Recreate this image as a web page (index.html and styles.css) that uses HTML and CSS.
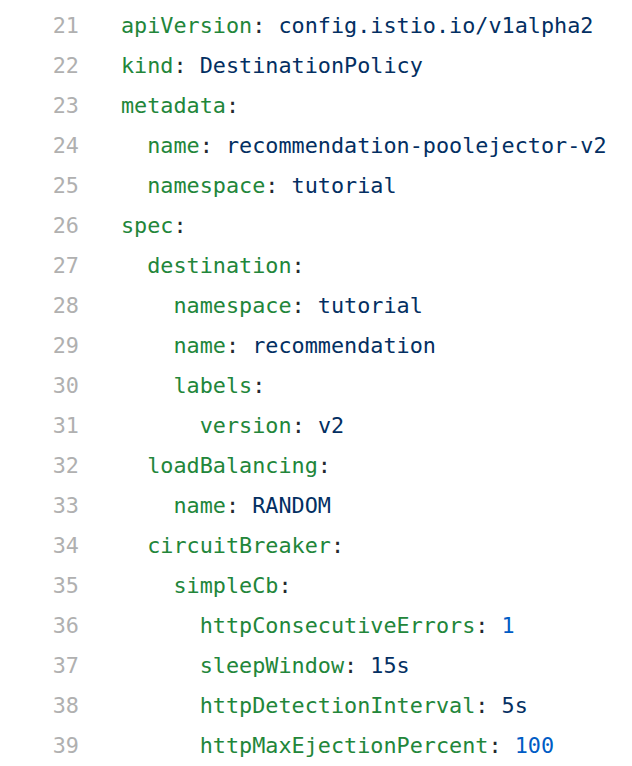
FILE: index.html
```html
<!DOCTYPE html>
<html>
<head>
<meta charset="utf-8">
<link rel="stylesheet" href="styles.css">
</head>
<body>
<div class="code">
  <div class="row"><span class="num">21</span><span class="line"><span class="k">apiVersion</span><span class="p">:</span> <span class="v">config.istio.io/v1alpha2</span></span></div>
  <div class="row"><span class="num">22</span><span class="line"><span class="k">kind</span><span class="p">:</span> <span class="v">DestinationPolicy</span></span></div>
  <div class="row"><span class="num">23</span><span class="line"><span class="k">metadata</span><span class="p">:</span></span></div>
  <div class="row"><span class="num">24</span><span class="line">  <span class="k">name</span><span class="p">:</span> <span class="v">recommendation-poolejector-v2</span></span></div>
  <div class="row"><span class="num">25</span><span class="line">  <span class="k">namespace</span><span class="p">:</span> <span class="v">tutorial</span></span></div>
  <div class="row"><span class="num">26</span><span class="line"><span class="k">spec</span><span class="p">:</span></span></div>
  <div class="row"><span class="num">27</span><span class="line">  <span class="k">destination</span><span class="p">:</span></span></div>
  <div class="row"><span class="num">28</span><span class="line">    <span class="k">namespace</span><span class="p">:</span> <span class="v">tutorial</span></span></div>
  <div class="row"><span class="num">29</span><span class="line">    <span class="k">name</span><span class="p">:</span> <span class="v">recommendation</span></span></div>
  <div class="row"><span class="num">30</span><span class="line">    <span class="k">labels</span><span class="p">:</span></span></div>
  <div class="row"><span class="num">31</span><span class="line">      <span class="k">version</span><span class="p">:</span> <span class="v">v2</span></span></div>
  <div class="row"><span class="num">32</span><span class="line">  <span class="k">loadBalancing</span><span class="p">:</span></span></div>
  <div class="row"><span class="num">33</span><span class="line">    <span class="k">name</span><span class="p">:</span> <span class="v">RANDOM</span></span></div>
  <div class="row"><span class="num">34</span><span class="line">  <span class="k">circuitBreaker</span><span class="p">:</span></span></div>
  <div class="row"><span class="num">35</span><span class="line">    <span class="k">simpleCb</span><span class="p">:</span></span></div>
  <div class="row"><span class="num">36</span><span class="line">      <span class="k">httpConsecutiveErrors</span><span class="p">:</span> <span class="n">1</span></span></div>
  <div class="row"><span class="num">37</span><span class="line">      <span class="k">sleepWindow</span><span class="p">:</span> <span class="v">15s</span></span></div>
  <div class="row"><span class="num">38</span><span class="line">      <span class="k">httpDetectionInterval</span><span class="p">:</span> <span class="v">5s</span></span></div>
  <div class="row"><span class="num">39</span><span class="line">      <span class="k">httpMaxEjectionPercent</span><span class="p">:</span> <span class="n">100</span></span></div>
</div>
</body>
</html>
```
FILE: styles.css
```css
html, body {
  margin: 0;
  padding: 0;
  background: #ffffff;
}
.code {
  padding-top: 6px;
  font-family: "DejaVu Sans Mono", monospace;
  font-size: 21.8px;
  display: flex;
  flex-direction: column;
}
.row {
  display: flex;
  height: 40px;
  line-height: 40px;
  white-space: pre;
}
.num {
  width: 79px;
  text-align: right;
  color: #b0b0b0;
  flex: none;
}
.line {
  padding-left: 42px;
  color: #24292e;
}
.k { color: #22863a; }
.p { color: #24292e; }
.v { color: #032f62; }
.n { color: #005cc5; }
```
